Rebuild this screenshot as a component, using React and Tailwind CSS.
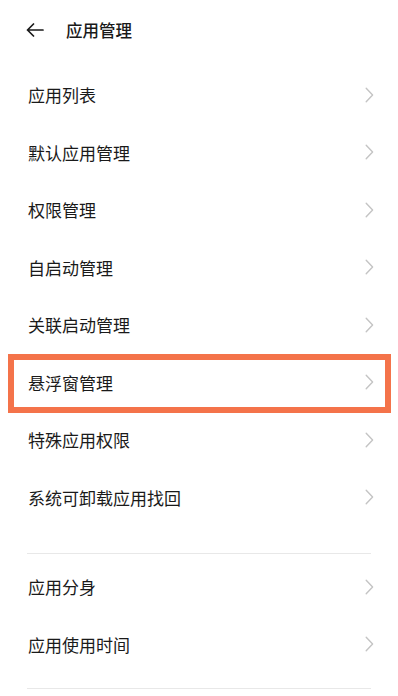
const items = [
  "应用列表",
  "默认应用管理",
  "权限管理",
  "自启动管理",
  "关联启动管理",
  "悬浮窗管理",
  "特殊应用权限",
  "系统可卸载应用找回",
];

const more = ["应用分身", "应用使用时间"];

const Chevron = () => (
  <svg width="9" height="16" viewBox="0 0 9 16" fill="none" className="shrink-0">
    <path d="M1.2 1.2 L7.6 8 L1.2 14.8" stroke="#c4c4c4" strokeWidth="1.4" strokeLinecap="round" strokeLinejoin="round" />
  </svg>
);

const Row = ({ label, highlight }) => (
  <div className="relative flex h-[57.5px] items-center justify-between pl-[28px] pr-[24px]">
    <span className="text-[17px] text-[#1a1a1a]">{label}</span>
    <Chevron />
    {highlight && (
      <div className="pointer-events-none absolute left-[8px] right-[7px] top-[0.5px] bottom-[-2px] border-[6px] border-[#f4734a]" />
    )}
  </div>
);

export default function App() {
  return (
    <div
      className="min-h-[696px] w-[398px] bg-white"
      style={{ fontFamily: '"Noto Sans CJK SC", "Noto Sans", sans-serif' }}
    >
      <header className="flex h-[60px] items-center pl-[26px]">
        <svg width="18" height="14" viewBox="0 0 18 14" fill="none">
          <path d="M17 7 H1.5 M7.5 1 L1.5 7 L7.5 13" stroke="#1a1a1a" strokeWidth="1.7" strokeLinecap="round" strokeLinejoin="round" />
        </svg>
        <h1 className="ml-[22px] text-[16.5px] font-medium text-[#1a1a1a]">应用管理</h1>
      </header>

      <div className="pt-[6px]">
        {items.map((label) => (
          <Row key={label} label={label} highlight={label === "悬浮窗管理"} />
        ))}
      </div>

      <div className="mx-[27px] mt-[27px] h-px bg-[#e8e8e8]" />

      <div className="pt-[4px]">
        {more.map((label) => (
          <Row key={label} label={label} />
        ))}
      </div>

      <div className="mx-[27px] mt-[15px] h-px bg-[#e8e8e8]" />
    </div>
  );
}
